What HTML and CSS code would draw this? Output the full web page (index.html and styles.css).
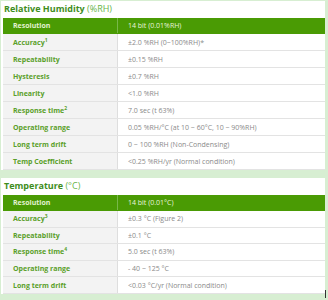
FILE: index.html
```html
<!DOCTYPE html>
<html>
<head>
<meta charset="utf-8">
<link rel="stylesheet" href="styles.css">
</head>
<body>
<div class="page">
  <section class="block">
    <h2 class="title">Relative Humidity <span class="unit">(%RH)</span></h2>
    <table class="spec">
      <tr class="head"><th>Resolution</th><td>14 bit (0.01%RH)</td></tr>
      <tr><th>Accuracy<sup>1</sup></th><td>±2.0 %RH (0~100%RH)*</td></tr>
      <tr><th>Repeatability</th><td>±0.15 %RH</td></tr>
      <tr><th>Hysteresis</th><td>±0.7 %RH</td></tr>
      <tr><th>Linearity</th><td>&lt;1.0 %RH</td></tr>
      <tr><th>Response time<sup>2</sup></th><td>7.0 sec (t 63%)</td></tr>
      <tr><th>Operating range</th><td>0.05 %RH/°C (at 10 ~ 60°C, 10 ~ 90%RH)</td></tr>
      <tr><th>Long term drift</th><td>0 ~ 100 %RH (Non-Condensing)</td></tr>
      <tr><th>Temp Coefficient</th><td>&lt;0.25 %RH/yr (Normal condition)</td></tr>
    </table>
  </section>
  <section class="block second">
    <h2 class="title">Temperature <span class="unit">(°C)</span></h2>
    <table class="spec small">
      <tr class="head"><th>Resolution</th><td>14 bit (0.01°C)</td></tr>
      <tr><th>Accuracy<sup>3</sup></th><td>±0.3 °C (Figure 2)</td></tr>
      <tr><th>Repeatability</th><td>±0.1 °C</td></tr>
      <tr><th>Response time<sup>4</sup></th><td>5.0 sec (t 63%)</td></tr>
      <tr><th>Operating range</th><td>- 40 ~ 125 °C</td></tr>
      <tr><th>Long term drift</th><td>&lt;0.03 °C/yr (Normal condition)</td></tr>
    </table>
  </section>
  <div class="scrollmark"></div>
</div>
</body>
</html>
```

FILE: styles.css
```css
html, body {
  margin: 0;
  padding: 0;
}
body {
  background: #d7eed2;
  font-family: "Open Sans", "DejaVu Sans", sans-serif;
  width: 328px;
  height: 300px;
  overflow: hidden;
}
.page {
  position: relative;
  padding: 1px 3px 0 1px;
}
.block {
  background: #ffffff;
  padding: 0 0 0 2px;
}
.second {
  margin-top: 8px;
}
.title {
  margin: 0;
  height: 17px;
  line-height: 16px;
  font-size: 9px;
  font-weight: 700;
  color: #3e8d1c;
  padding-left: 1px;
  background: #ffffff;
}
.title .unit {
  font-weight: 400;
  color: #68b54a;
}
.spec {
  border-collapse: collapse;
  width: 322px;
  table-layout: fixed;
}
.spec th, .spec td {
  height: 16px;
  padding: 0;
  border-bottom: 1px solid #e3e3e3;
  font-size: 7px;
  line-height: 9px;
  vertical-align: middle;
  text-align: left;
}
.spec .head th, .spec .head td {
  height: 15px;
}
.small th, .small td {
  height: 15.6px;
}
.spec th {
  width: 104px;
  padding-left: 10px;
  background: #f3f3f3;
  color: #5a9f2a;
  font-weight: 700;
  border-right: 1px solid #dedede;
}
.spec td {
  padding-left: 10px;
  background: #ffffff;
  color: #8a8a8a;
}
.spec sup {
  font-size: 5px;
  line-height: 0;
  vertical-align: 3px;
}
.spec .head th, .spec .head td {
  background: #4a9b04;
  border-bottom: 1px solid #4a9b04;
}
.spec .head th {
  color: #e3f2d2;
  border-right: 1px solid #78b84a;
}
.spec .head td {
  color: #e8f4dc;
}
.scrollmark {
  position: absolute;
  left: 325px;
  top: 290px;
  width: 1px;
  height: 8px;
  background: #333;
}
```
